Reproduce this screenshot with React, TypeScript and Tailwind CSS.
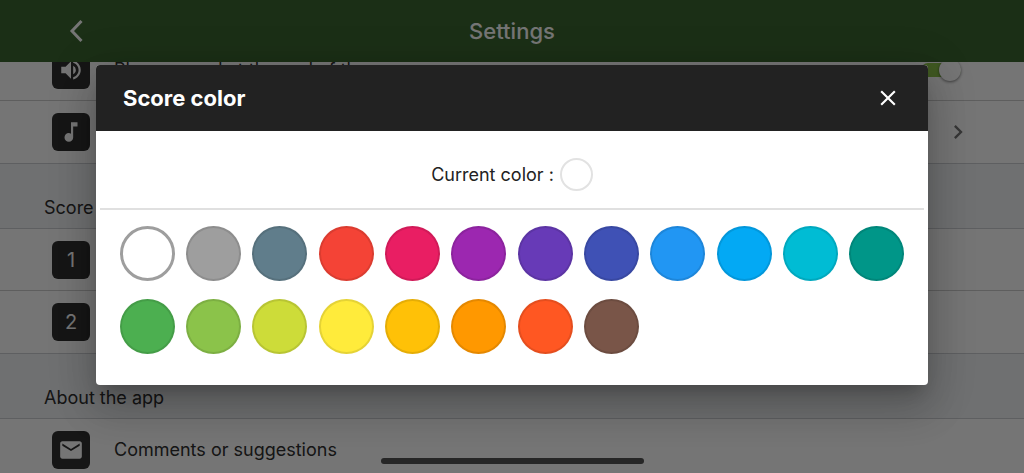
import type { ReactNode } from 'react';
import {
  MdChevronRight,
  MdClose,
  MdEmail,
  MdMusicNote,
  MdVolumeUp,
} from 'react-icons/md';

const swatches = [
  { name: 'White', className: 'border-[3px] border-[#9e9e9e] bg-white' },
  { name: 'Grey', className: 'border-2 border-black/10 bg-[#9e9e9e]' },
  { name: 'Blue grey', className: 'border-2 border-black/10 bg-[#607d8b]' },
  { name: 'Red', className: 'border-2 border-black/10 bg-[#f44336]' },
  { name: 'Pink', className: 'border-2 border-black/10 bg-[#e91e63]' },
  { name: 'Purple', className: 'border-2 border-black/10 bg-[#9c27b0]' },
  { name: 'Deep purple', className: 'border-2 border-black/10 bg-[#673ab7]' },
  { name: 'Indigo', className: 'border-2 border-black/10 bg-[#3f51b5]' },
  { name: 'Blue', className: 'border-2 border-black/10 bg-[#2196f3]' },
  { name: 'Light blue', className: 'border-2 border-black/10 bg-[#03a9f4]' },
  { name: 'Cyan', className: 'border-2 border-black/10 bg-[#00bcd4]' },
  { name: 'Teal', className: 'border-2 border-black/10 bg-[#009688]' },
  { name: 'Green', className: 'border-2 border-black/10 bg-[#4caf50]' },
  { name: 'Light green', className: 'border-2 border-black/10 bg-[#8bc34a]' },
  { name: 'Lime', className: 'border-2 border-black/10 bg-[#cddc39]' },
  { name: 'Yellow', className: 'border-2 border-black/10 bg-[#ffeb3b]' },
  { name: 'Amber', className: 'border-2 border-black/10 bg-[#ffc107]' },
  { name: 'Orange', className: 'border-2 border-black/10 bg-[#ff9800]' },
  { name: 'Deep orange', className: 'border-2 border-black/10 bg-[#ff5722]' },
  { name: 'Brown', className: 'border-2 border-black/10 bg-[#795548]' },
];

const SectionTitle = ({ children }: { children: ReactNode }) => (
  <h2 className="flex h-[66px] items-end border-y border-[#cdcfd3] bg-[#f1f3f6] px-11 pb-1.5 text-lg">
    {children}
  </h2>
);

const Tile = ({ children }: { children: ReactNode }) => (
  <span className="flex size-[38px] shrink-0 items-center justify-center rounded-md bg-[#303030] text-xl text-white">
    {children}
  </span>
);

const Row = ({ children }: { children?: ReactNode }) => (
  <li className="flex h-[62px] items-center gap-6 border-b border-[#cdcdcd] px-[52px] text-lg last:border-b-0">
    {children}
  </li>
);

const SettingsPage = () => (
  <div className="flex h-full flex-col bg-white text-[#303030]">
    <header className="z-10 grid h-[62px] shrink-0 grid-cols-3 items-center bg-[#3b6830] px-16 text-white">
      <button aria-label="Back" className="w-6">
        <svg viewBox="0 0 24 24" className="size-6" fill="none" stroke="currentColor" strokeWidth="3">
          <path d="M17.5 2 L8 12 L17.5 22" />
        </svg>
      </button>
      <h1 className="text-center text-[22px] font-medium">Settings</h1>
    </header>
    <main className="min-h-0 flex-1 overflow-hidden">
      <ul className="-mt-[23px]">
        <Row>
          <Tile>
            <MdVolumeUp className="size-[26px]" />
          </Tile>
          <label htmlFor="end-sound" className="flex-1">
            Play a sound at the end of the
          </label>
          <span className="relative mr-[11px] flex h-[22px] w-10 items-center">
            <input
              id="end-sound"
              type="checkbox"
              defaultChecked
              className="h-3.5 w-10 appearance-none rounded-full bg-[#8bc34a]"
            />
            <span className="pointer-events-none absolute right-0 size-[22px] rounded-full bg-white shadow-[0_1px_3px_rgba(0,0,0,0.5)]" />
          </span>
        </Row>
        <Row>
          <Tile>
            <MdMusicNote className="size-[26px]" />
          </Tile>
          <span className="flex-1">Sound</span>
          <MdChevronRight className="size-7 text-[#777]" />
        </Row>
      </ul>
      <SectionTitle>Score</SectionTitle>
      <ul>
        <Row>
          <Tile>1</Tile>
        </Row>
        <Row>
          <Tile>2</Tile>
        </Row>
      </ul>
      <SectionTitle>About the app</SectionTitle>
      <ul>
        <Row>
          <Tile>
            <MdEmail className="size-[26px]" />
          </Tile>
          <span>Comments or suggestions</span>
        </Row>
      </ul>
    </main>
  </div>
);

const ScoreColorDialog = () => (
  <div
    role="dialog"
    aria-labelledby="dialog-title"
    className="w-full overflow-hidden rounded bg-white text-[#222] shadow-[0_11px_15px_-7px_rgba(0,0,0,0.2),0_24px_38px_3px_rgba(0,0,0,0.14),0_9px_46px_8px_rgba(0,0,0,0.12)]"
  >
    <div className="flex h-[66px] items-center justify-between bg-[#222] px-[27px] text-white">
      <h2 id="dialog-title" className="text-[22px] font-bold">
        Score color
      </h2>
      <button aria-label="Close">
        <MdClose className="size-[26px]" />
      </button>
    </div>
    <div className="mx-1 flex h-[79px] items-center justify-center gap-1.5 border-b-2 border-[#e0e0e0] pt-2.5 text-lg">
      <span>Current color :</span>
      <span className="size-[33px] rounded-full border-2 border-[#e2e2e2] bg-white" />
    </div>
    <div className="grid grid-cols-12 justify-items-center gap-y-[18px] px-[18px] pt-4 pb-[31px]">
      {swatches.map((swatch) => (
        <button
          key={swatch.name}
          aria-label={swatch.name}
          className={`size-[55px] rounded-full ${swatch.className}`}
        />
      ))}
    </div>
  </div>
);

const App = () => {
  return (
    <div className="relative h-screen overflow-hidden font-['Inter',sans-serif]">
      <SettingsPage />
      <div className="absolute inset-0 z-20 flex items-center justify-center bg-black/54 px-24 pb-[23px]">
        <ScoreColorDialog />
      </div>
      <div className="absolute inset-x-0 bottom-[9px] z-30 flex justify-center">
        <div className="h-1.5 w-[263px] rounded-full bg-[#262626]" />
      </div>
    </div>
  );
};

export default App;
